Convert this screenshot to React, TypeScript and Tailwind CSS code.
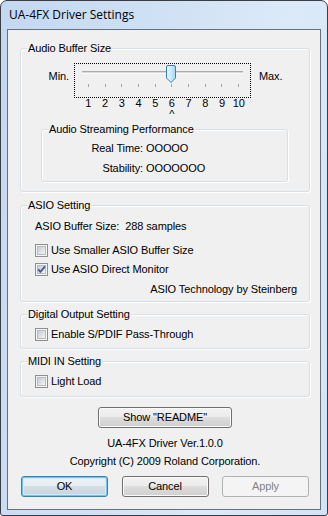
import React from "react";

function Check({ checked }: { checked?: boolean }) {
  return (
    <svg width="13" height="13" viewBox="0 0 13 13" className="shrink-0">
      <defs>
        <linearGradient id="cbg" x1="0" y1="0" x2="1" y2="1">
          <stop offset="0" stopColor="#c4c8ce" />
          <stop offset="1" stopColor="#f6f6f6" />
        </linearGradient>
      </defs>
      <rect x="0.5" y="0.5" width="12" height="12" fill="#f4f4f4" stroke="#8e8f8f" />
      <rect x="2.5" y="2.5" width="8" height="8" fill="url(#cbg)" stroke="#b9bcc1" />
      {checked && (
        <path
          d="M3.2 6.4 L5.4 8.9 L10 3.4"
          fill="none"
          stroke="#4a5d8e"
          strokeWidth="1.9"
          strokeLinejoin="round"
        />
      )}
    </svg>
  );
}

function Group({
  title,
  className = "",
  children,
}: {
  title: string;
  className?: string;
  children: React.ReactNode;
}) {
  return (
    <fieldset
      className={`border border-[#d5dfe5] rounded-[3px] shadow-[inset_1px_1px_0_#ffffff,1px_1px_0_#ffffff] ${className}`}
    >
      <legend className="ml-[6px] px-[1px] leading-[13px] bg-[#f0f0f0]">{title}</legend>
      {children}
    </fieldset>
  );
}

function Slider() {
  const ticks = Array.from({ length: 10 }, (_, i) => Math.round(13 + i * 16.667));
  return (
    <svg width="175" height="33" viewBox="0 0 175 33">
      <defs>
        <linearGradient id="thumb" x1="0" y1="0" x2="1" y2="0">
          <stop offset="0" stopColor="#eaf7fd" />
          <stop offset="0.5" stopColor="#c8e9fa" />
          <stop offset="1" stopColor="#a3d6f2" />
        </linearGradient>
      </defs>
      <rect x="7" y="7" width="161" height="1" fill="#a9abad" />
      <rect x="7" y="8" width="161" height="1" fill="#d6d9db" />
      <rect x="7" y="9" width="161" height="1" fill="#fbfbfb" />
      {ticks.map((x) => (
        <rect key={x} x={x} y="20" width="1" height="3" fill="#a3a3a3" />
      ))}
      <path
        d="M91.5 3 Q91.5 1.5 93 1.5 H99 Q100.5 1.5 100.5 3 V14 L96 18.5 L91.5 14 Z"
        fill="url(#thumb)"
        stroke="#3c7fb1"
      />
    </svg>
  );
}

function Button({
  label,
  kind = "normal",
  className = "",
}: {
  label: string;
  kind?: "normal" | "default" | "disabled";
  className?: string;
}) {
  const base = "h-[21px] rounded-[3px] border flex items-center justify-center";
  if (kind === "disabled") {
    return (
      <div className={`${base} border-[#adb2b5] bg-[#f4f4f4] text-[#838383] ${className}`}>{label}</div>
    );
  }
  if (kind === "default") {
    return (
      <div
        className={`${base} border-[#3c7fb1] bg-[linear-gradient(180deg,#eef3f7_0%,#e6ecf1_50%,#d6dee5_50%,#c9d3dc_100%)] shadow-[inset_0_0_0_1px_#6fc6f2,inset_0_0_0_2px_#cdebfa] ${className}`}
      >
        {label}
      </div>
    );
  }
  return (
    <div
      className={`${base} border-[#707070] bg-[linear-gradient(180deg,#f2f2f2_0%,#ebebeb_50%,#dddddd_50%,#cfcfcf_100%)] shadow-[inset_0_0_0_1px_#fbfbfb] ${className}`}
    >
      {label}
    </div>
  );
}

export default function App() {
  const nums = [1, 2, 3, 4, 5, 6, 7, 8, 9, 10];
  return (
    <div className="w-[328px] h-[516px] bg-white font-['Liberation_Sans',Arial,sans-serif] text-[11px] text-black tracking-[-0.1px]">
      <div className="w-full h-full flex flex-col rounded-t-[7px] rounded-b-[3px] border border-[#3a3e44] bg-[linear-gradient(100deg,#c3d8f1_0%,#cfe1f5_40%,#dceaf8_70%,#d2e3f6_100%)] overflow-hidden">
        <div className="h-[28px] shrink-0 flex items-center pl-[8px] font-['Open_Sans',sans-serif] text-[12px] tracking-normal">
          UA-4FX Driver Settings
        </div>
        <div className="mx-[6px] h-[481px] shrink-0 border border-[#66717d] bg-[#f0f0f0] flex flex-col pl-[12px] pr-[10px]">
          <Group title="Audio Buffer Size" className="mt-[12px] pt-[8px] pb-[9px]">
            <div className="flex">
              <div className="w-[53px] pr-[5px] text-right leading-[13px] mt-[7px]">Min.</div>
              <div className="w-[177px] h-[35px] border border-dotted border-black">
                <Slider />
              </div>
              <div className="ml-[8px] leading-[13px] mt-[7px]">Max.</div>
            </div>
            <div className="ml-[59px] w-[167px] grid grid-cols-10 text-center leading-[13px] -mt-[1px]">
              {nums.map((n) => (
                <div key={n}>{n}</div>
              ))}
            </div>
            <div className="ml-[59px] w-[167px] grid grid-cols-10 text-center leading-[13px] -mt-[2px]">
              <div className="col-start-6">^</div>
            </div>
            <Group title="Audio Streaming Performance" className="ml-[20px] w-[247px] mt-[2px] pt-[2px] pb-[3px]">
              <div className="h-[20px] flex items-center leading-[13px]">
                <div className="w-[101px] text-right">Real Time:</div>
                <div className="pl-[3px]">OOOOO</div>
              </div>
              <div className="h-[20px] flex items-center leading-[13px]">
                <div className="w-[101px] text-right">Stability:</div>
                <div className="pl-[3px]">OOOOOOO</div>
              </div>
            </Group>
          </Group>

          <Group title="ASIO Setting" className="mt-[7px] pt-[8px] pb-[5px]">
            <div className="pl-[14px]">
              <div className="leading-[13px] whitespace-pre">ASIO Buffer Size:  288 samples</div>
              <div className="mt-[8px] h-[19px] flex items-center leading-[13px]">
                <Check />
                <span className="ml-[3px]">Use Smaller ASIO Buffer Size</span>
              </div>
              <div className="h-[19px] flex items-center leading-[13px]">
                <Check checked />
                <span className="ml-[3px]">Use ASIO Direct Monitor</span>
              </div>
              <div className="mt-[4px] leading-[13px] text-right pr-[12px]">ASIO Technology by Steinberg</div>
            </div>
          </Group>

          <Group title="Digital Output Setting" className="mt-[6px] pt-[4px] pb-[4px]">
            <div className="pl-[14px] h-[19px] flex items-center leading-[13px]">
              <Check />
              <span className="ml-[3px]">Enable S/PDIF Pass-Through</span>
            </div>
          </Group>

          <Group title="MIDI IN Setting" className="mt-[6px] pt-[4px] pb-[5px]">
            <div className="pl-[14px] h-[19px] flex items-center leading-[13px]">
              <Check />
              <span className="ml-[3px]">Light Load</span>
            </div>
          </Group>

          <Button label={'Show "README"'} className="mt-[10px] ml-[78px] w-[134px]" />
          <div className="mt-[9px] leading-[13px] text-center">UA-4FX Driver Ver.1.0.0</div>
          <div className="mt-[5px] leading-[13px] text-center">Copyright (C) 2009 Roland Corporation.</div>
          <div className="mt-[8px] ml-[1px] w-[288px] flex justify-between">
            <Button label="OK" kind="default" className="w-[87px]" />
            <Button label="Cancel" className="w-[87px]" />
            <Button label="Apply" kind="disabled" className="w-[87px]" />
          </div>
        </div>
      </div>
    </div>
  );
}
